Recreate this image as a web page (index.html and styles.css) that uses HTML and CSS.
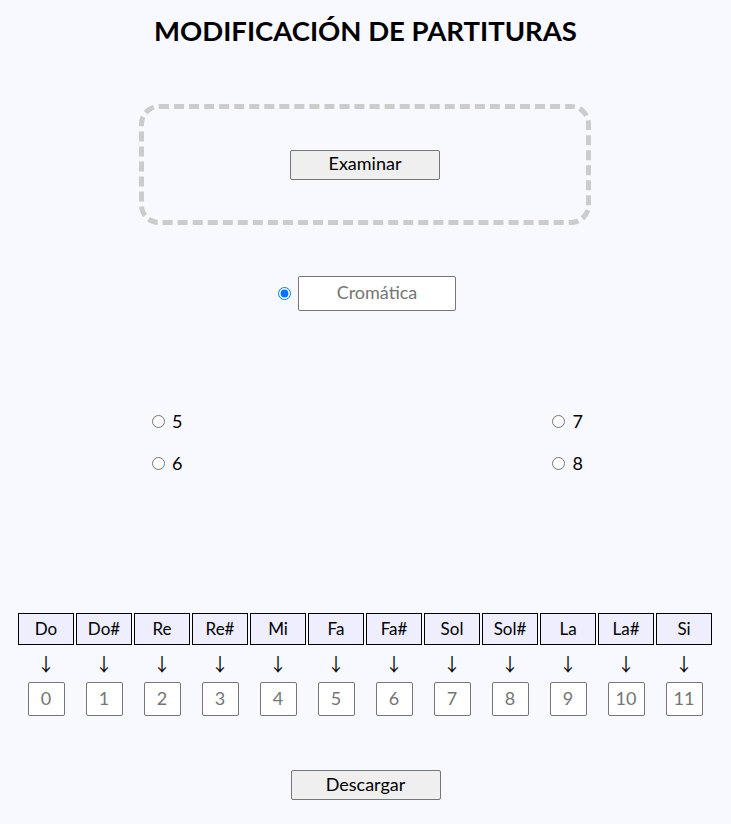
FILE: index.html
```html
<!DOCTYPE html>
<html lang="es">
<head>
<meta charset="utf-8">
<title>Modificación de partituras</title>
<link rel="stylesheet" href="styles.css">
</head>
<body>
<h1 class="title">MODIFICACIÓN DE PARTITURAS</h1>

<div class="dropzone">
  <button class="btn" type="button">Examinar</button>
</div>

<div class="scale-row">
  <input class="radio" type="radio" name="scale" checked>
  <input class="scale-input" type="text" placeholder="Cromática">
</div>

<div class="options">
  <div class="opt-col">
    <label class="opt"><input class="radio" type="radio" name="n"> 5</label>
    <label class="opt"><input class="radio" type="radio" name="n"> 6</label>
  </div>
  <div class="opt-col">
    <label class="opt"><input class="radio" type="radio" name="n"> 7</label>
    <label class="opt"><input class="radio" type="radio" name="n"> 8</label>
  </div>
</div>

<div class="notes">
  <div class="note"><div class="note-name">Do</div><div class="arrow">↓</div><input class="num" type="text" placeholder="0"></div>
  <div class="note"><div class="note-name">Do#</div><div class="arrow">↓</div><input class="num" type="text" placeholder="1"></div>
  <div class="note"><div class="note-name">Re</div><div class="arrow">↓</div><input class="num" type="text" placeholder="2"></div>
  <div class="note"><div class="note-name">Re#</div><div class="arrow">↓</div><input class="num" type="text" placeholder="3"></div>
  <div class="note"><div class="note-name">Mi</div><div class="arrow">↓</div><input class="num" type="text" placeholder="4"></div>
  <div class="note"><div class="note-name">Fa</div><div class="arrow">↓</div><input class="num" type="text" placeholder="5"></div>
  <div class="note"><div class="note-name">Fa#</div><div class="arrow">↓</div><input class="num" type="text" placeholder="6"></div>
  <div class="note"><div class="note-name">Sol</div><div class="arrow">↓</div><input class="num" type="text" placeholder="7"></div>
  <div class="note"><div class="note-name">Sol#</div><div class="arrow">↓</div><input class="num" type="text" placeholder="8"></div>
  <div class="note"><div class="note-name">La</div><div class="arrow">↓</div><input class="num" type="text" placeholder="9"></div>
  <div class="note"><div class="note-name">La#</div><div class="arrow">↓</div><input class="num" type="text" placeholder="10"></div>
  <div class="note"><div class="note-name">Si</div><div class="arrow">↓</div><input class="num" type="text" placeholder="11"></div>
</div>

<div class="footer">
  <button class="btn" type="button">Descargar</button>
</div>
</body>
</html>
```

FILE: styles.css
```css
html, body {
  margin: 0;
  padding: 0;
  background: #f8f8ff;
}
body {
  font-family: Lato, "Liberation Sans", sans-serif;
  color: #000;
  width: 731px;
}
.title {
  margin: 0;
  padding-top: 14px;
  height: 104px;
  box-sizing: border-box;
  font-size: 27.5px;
  font-weight: 700;
  text-align: center;
  line-height: 34px;
}
.dropzone {
  width: 452px;
  height: 121px;
  margin: 0 0 0 139px;
  box-sizing: border-box;
  border: 5px dashed #cccccc;
  border-radius: 20px;
  display: flex;
  align-items: center;
  justify-content: center;
}
.btn {
  width: 150px;
  height: 30px;
  background: #efefef;
  border: 1px solid #767676;
  border-radius: 2px;
  font-family: Lato, "Liberation Sans", sans-serif;
  font-size: 18px;
  color: #000;
  padding: 0 0 3px;
}
.scale-row {
  margin-top: 51px;
  display: flex;
  align-items: center;
  padding-left: 273px;
  height: 35px;
}
.radio {
  width: 13px;
  height: 13px;
  margin: 0 7px 0 5px;
}
.scale-input {
  width: 158px;
  height: 35px;
  box-sizing: border-box;
  border: 1px solid #767676;
  border-radius: 2px;
  background: #fff;
  font-family: Lato, "Liberation Sans", sans-serif;
  font-size: 18px;
  text-align: center;
  padding: 0 0 3px;
}
.scale-input::placeholder {
  color: #757575;
}
.options {
  margin-top: 99px;
  display: flex;
  padding-left: 147px;
  gap: 365px;
}
.opt-col {
  display: flex;
  flex-direction: column;
  gap: 20px;
}
.opt {
  display: flex;
  align-items: center;
  height: 22px;
  font-size: 18px;
}
.opt .radio {
  margin: 0 7px 0 5px;
}
.notes {
  margin-top: 139px;
  display: flex;
  padding-left: 18px;
  gap: 2px;
}
.note {
  width: 56px;
  display: flex;
  flex-direction: column;
  align-items: center;
}
.note-name {
  width: 56px;
  height: 32px;
  box-sizing: border-box;
  border: 1px solid #000;
  background: #eeeeff;
  display: flex;
  align-items: center;
  justify-content: center;
  font-size: 17px;
  padding-bottom: 1px;
}
.arrow {
  height: 37px;
  line-height: 37px;
  font-size: 18px;
  font-family: "Noto Sans CJK JP", sans-serif;
}
.num {
  width: 37px;
  height: 34px;
  box-sizing: border-box;
  border: 1px solid #767676;
  border-radius: 2px;
  background: #fff;
  padding: 0 0 2px;
  text-align: center;
  font-family: Lato, "Liberation Sans", sans-serif;
  font-size: 18px;
}
.num::placeholder {
  color: #757575;
}
.footer {
  margin-top: 54px;
  display: flex;
  justify-content: center;
}
```
